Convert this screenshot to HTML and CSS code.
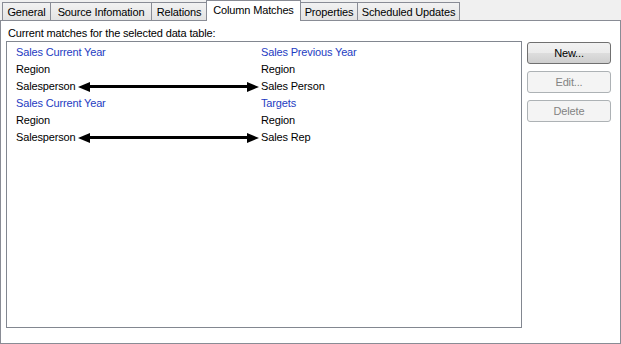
FILE: index.html
```html
<!DOCTYPE html>
<html>
<head>
<meta charset="utf-8">
<link rel="stylesheet" href="styles.css">
</head>
<body>
<div class="tabs">
  <div class="tab w-general">General</div>
  <div class="tab w-source">Source Infomation</div>
  <div class="tab w-rel">Relations</div>
  <div class="tab active w-col">Column Matches</div>
  <div class="tab w-prop">Properties</div>
  <div class="tab w-sched">Scheduled Updates</div>
</div>
<div class="panel">
  <div class="main">
    <div class="label">Current matches for the selected data table:</div>
    <div class="listbox">
      <div class="row head"><div class="lcol">Sales Current Year</div><div class="rcol">Sales Previous Year</div></div>
      <div class="row"><div class="lcol">Region</div><div class="rcol">Region</div></div>
      <div class="row"><div class="lcol">Salesperson<div class="arrow"><span class="tri-l"></span><span class="shaft"></span><span class="tri-r"></span></div></div><div class="rcol">Sales Person</div></div>
      <div class="row head"><div class="lcol">Sales Current Year</div><div class="rcol">Targets</div></div>
      <div class="row"><div class="lcol">Region</div><div class="rcol">Region</div></div>
      <div class="row"><div class="lcol">Salesperson<div class="arrow"><span class="tri-l"></span><span class="shaft"></span><span class="tri-r"></span></div></div><div class="rcol">Sales Rep</div></div>
    </div>
  </div>
  <div class="buttons">
    <button class="btn">New...</button>
    <button class="btn" disabled>Edit...</button>
    <button class="btn" disabled>Delete</button>
  </div>
</div>
</body>
</html>
```

FILE: styles.css
```css
html, body {
  margin: 0;
  padding: 0;
  background: #f0f0f0;
  font-family: "Liberation Sans", Arial, sans-serif;
  font-size: 11px;
  letter-spacing: -0.15px;
  color: #000;
}
.tabs {
  display: flex;
  align-items: flex-end;
  height: 20px;
  padding-left: 2px;
  position: relative;
  z-index: 2;
}
.tab {
  box-sizing: border-box;
  height: 18px;
  border: 1px solid #898c95;
  border-bottom: none;
  border-left: none;
  background: linear-gradient(#f2f2f2, #e3e3e3);
  display: flex;
  align-items: center;
  justify-content: center;
  padding-top: 1px;
  white-space: nowrap;
}
.tab:first-child { border-left: 1px solid #898c95; }
.tab.active {
  height: 21px;
  background: #fff;
  border-left: 1px solid #898c95;
  margin-left: -1px;
  margin-bottom: -1px;
  padding-top: 0;
  padding-bottom: 3px;
}
.w-general { width: 49px; }
.w-source { width: 101px; }
.w-rel { width: 55px; }
.w-col { width: 95px; }
.w-prop { width: 57px; }
.w-sched { width: 102px; }
.panel {
  box-sizing: border-box;
  height: 324px;
  width: 621px;
  background: #fff;
  border: 1px solid #898c95;
  display: flex;
  padding: 6px 0 0 5px;
  position: relative;
  z-index: 1;
}
.main {
  display: flex;
  flex-direction: column;
}
.label {
  height: 14px;
  padding-left: 2px;
  line-height: 13px;
}
.listbox {
  box-sizing: border-box;
  width: 516px;
  height: 287px;
  border: 1px solid #828790;
  padding: 2px 0 0 9px;
}
.row {
  display: flex;
  height: 17px;
  line-height: 17px;
}
.row.head { color: #1e3cc2; }
.lcol {
  width: 245px;
  display: flex;
  align-items: center;
}
.arrow {
  flex: 1;
  display: flex;
  align-items: center;
  margin: 0 2px 0 2px;
}
.tri-l {
  width: 0;
  height: 0;
  border-top: 5px solid transparent;
  border-bottom: 5px solid transparent;
  border-right: 12px solid #000;
}
.tri-r {
  width: 0;
  height: 0;
  border-top: 5px solid transparent;
  border-bottom: 5px solid transparent;
  border-left: 12px solid #000;
}
.shaft {
  flex: 1;
  height: 3px;
  background: #000;
}
.buttons {
  display: flex;
  flex-direction: column;
  gap: 7px;
  margin-left: 5px;
  padding-top: 15px;
}
.btn {
  box-sizing: border-box;
  width: 84px;
  height: 22px;
  font-family: "Liberation Sans", Arial, sans-serif;
  font-size: 11px;
  letter-spacing: -0.15px;
  color: #000;
  border: 1px solid #707070;
  border-radius: 3px;
  background: linear-gradient(#f2f2f2 0%, #ebebeb 50%, #dddddd 51%, #cfcfcf 100%);
  padding: 0;
}
.btn:disabled {
  color: #838383;
  border-color: #adb2b5;
  background: #f4f4f4;
}
```
